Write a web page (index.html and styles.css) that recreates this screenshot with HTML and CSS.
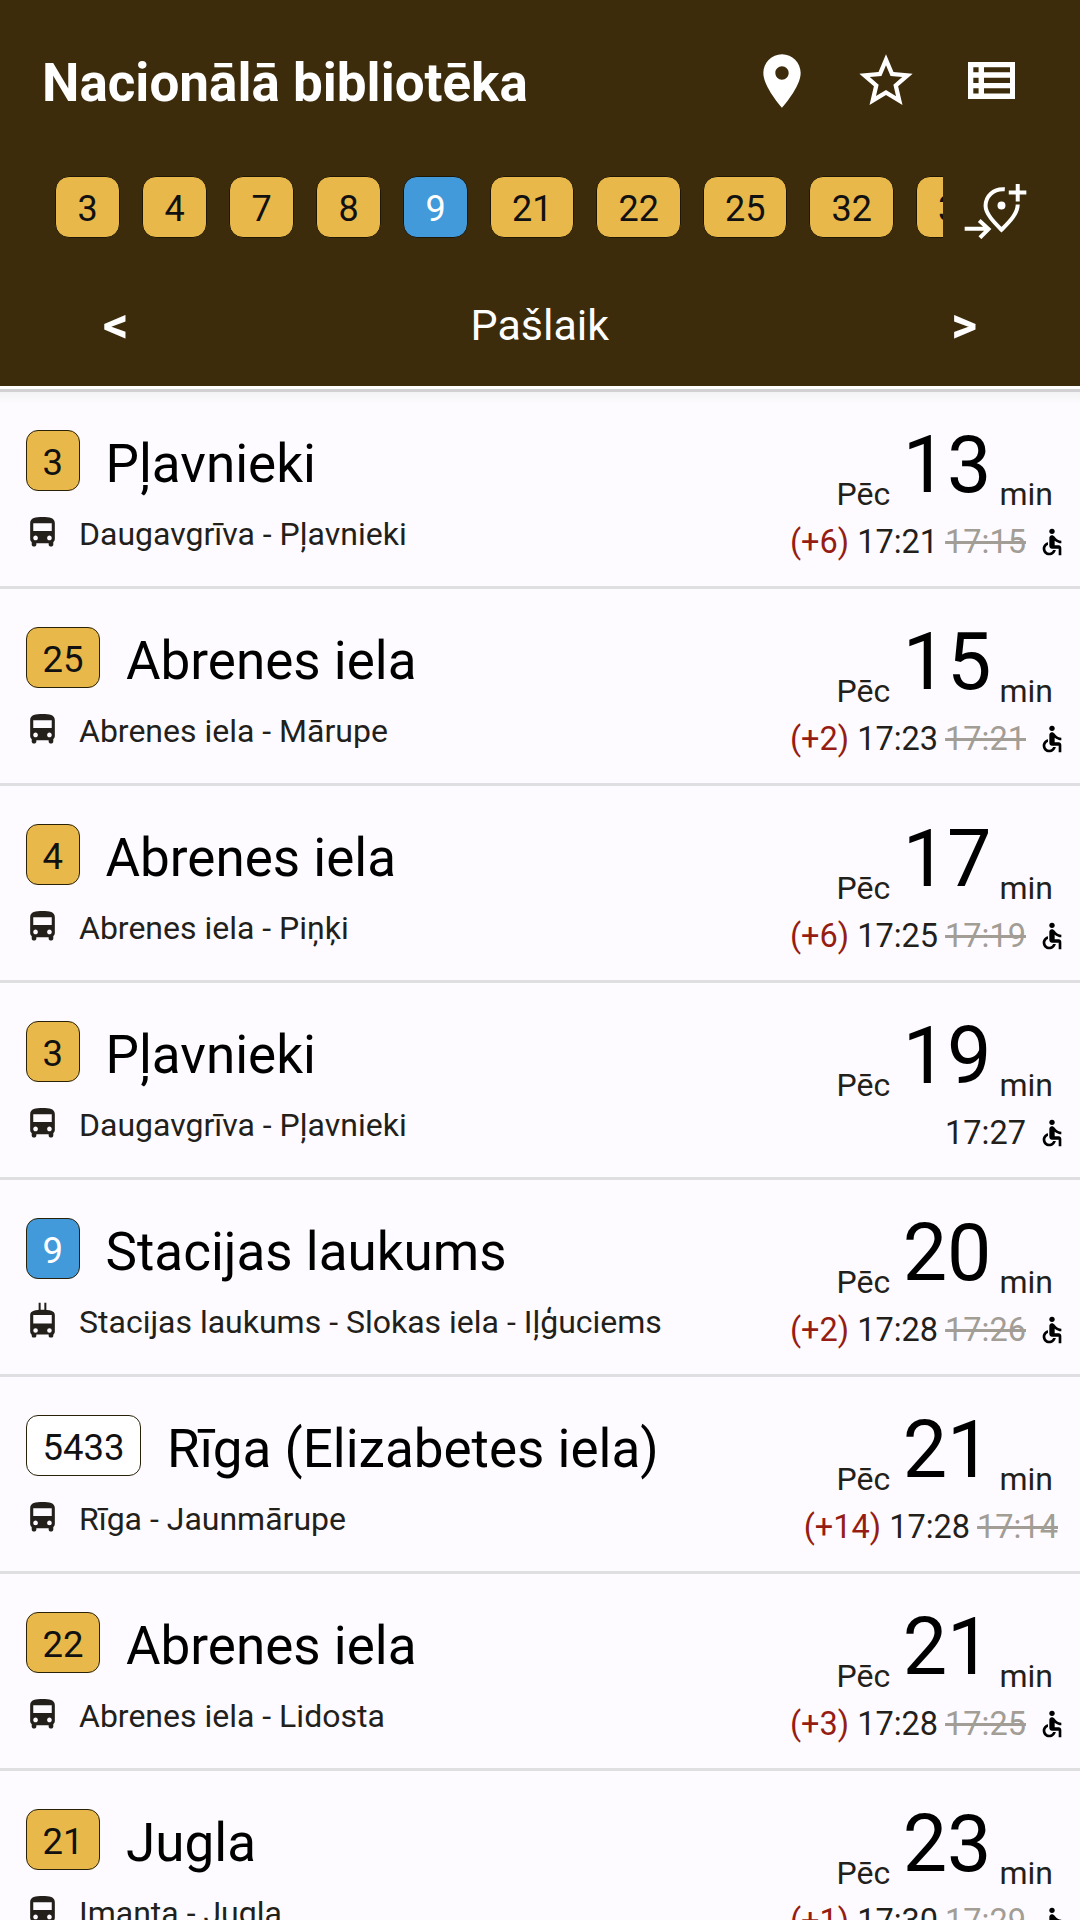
FILE: index.html
```html
<!DOCTYPE html>
<html lang="lv">
<head>
<meta charset="utf-8">
<title>Nacionālā bibliotēka</title>
<link rel="stylesheet" href="styles.css">
</head>
<body>
<svg class="defs" width="0" height="0" aria-hidden="true">
  <symbol id="bus" viewBox="0 0 24 24"><path d="M4 16c0 .88.39 1.67 1 2.22V20c0 .55.45 1 1 1h1c.55 0 1-.45 1-1v-1h8v1c0 .55.45 1 1 1h1c.55 0 1-.45 1-1v-1.78c.61-.55 1-1.34 1-2.22V6c0-3.5-3.58-4-8-4s-8 .5-8 4v10zm3.5 1c-.83 0-1.5-.67-1.5-1.5S6.67 14 7.5 14s1.5.67 1.5 1.5S8.33 17 7.5 17zm9 0c-.83 0-1.5-.67-1.5-1.5s.67-1.5 1.5-1.5 1.5.67 1.5 1.5-.67 1.5-1.5 1.5zm1.5-6H6V6h12v5z"/></symbol>
  <symbol id="trolley" viewBox="0 -2 24 24"><path fill-rule="evenodd" d="M4 17c0 .88.39 1.67 1 2.22V20c0 .55.45 1 1 1h1c.55 0 1-.45 1-1v-1h8v1c0 .55.45 1 1 1h1c.55 0 1-.45 1-1v-.78c.61-.55 1-1.34 1-2.22V6.500c0-3-3.58-3.500-8-3.500S4 3.500 4 6.500V17zM7.500 18a1.500 1.500 0 1 0 0-3 1.500 1.500 0 0 0 0 3zM16.500 18a1.500 1.500 0 1 0 0-3 1.500 1.500 0 0 0 0 3zM18 12V6.500H6V12h12z"/><path d="M9.500-1.500h1.300v6H9.500zM13.200-1.500h1.300v6h-1.300z"/></symbol>
  <symbol id="access" viewBox="0 0 24 24"><circle cx="12" cy="4" r="2"/><path d="M19 13v-2c-1.540.02-3.090-.75-4.070-1.830l-1.290-1.430c-.17-.19-.38-.34-.61-.45-.01 0-.01-.01-.02-.01H13c-.35-.2-.75-.3-1.190-.26C10.760 7.110 10 8.040 10 9.090V15c0 1.100.9 2 2 2h5v5h2v-5.500c0-1.100-.9-2-2-2h-3v-3.450c1.290 1.070 3.250 1.940 5 1.950zm-6.170 5c-.41 1.160-1.520 2-2.830 2-1.660 0-3-1.340-3-3 0-1.310.84-2.410 2-2.830V12.100c-2.280.46-4 2.480-4 4.900 0 2.760 2.240 5 5 5 2.420 0 4.440-1.720 4.900-4h-2.070z"/></symbol>
</svg>

<header class="header">
  <div class="top">
    <h1 class="title">Nacionālā bibliotēka</h1>
    <div class="actions">
      <svg class="act pin" viewBox="0 0 24 24"><path d="M12 2C8.130 2 5 5.130 5 9c0 5.250 7 13 7 13s7-7.750 7-13c0-3.870-3.130-7-7-7zm0 9.500c-1.380 0-2.500-1.120-2.500-2.500s1.120-2.500 2.500-2.500 2.500 1.120 2.500 2.500-1.120 2.500-2.500 2.500z"/></svg>
      <svg class="act" viewBox="0 0 24 24"><path d="M22 9.240l-7.190-.62L12 2 9.190 8.630 2 9.240l5.460 4.730L5.820 21 12 17.270 18.180 21l-1.630-7.030L22 9.240zM12 15.400l-3.760 2.270 1-4.280-3.320-2.880 4.380-.38L12 6.100l1.710 4.040 4.380.38-3.320 2.880 1 4.280L12 15.400z"/></svg>
      <svg class="act-table" viewBox="0 0 47.300 37"><path fill-rule="evenodd" d="M0 0h47.300v37H0zM5.300 5.300v5h5.300v-5zM16 5.300v5h26v-5zM5.300 15.700v5.300h5.300v-5.300zM16 15.700v5.300h26v-5.300zM5.300 26.300v5.300h5.300v-5.300zM16 26.300v5.300h26v-5.300z"/></svg>
    </div>
  </div>
  <div class="rail-row">
    <div class="rail">
      <span class="chip y">3</span><span class="chip y">4</span><span class="chip y">7</span><span class="chip y">8</span><span class="chip b">9</span><span class="chip y">21</span><span class="chip y">22</span><span class="chip y">25</span><span class="chip y">32</span><span class="chip y">38</span>
    </div>
    <svg class="add" viewBox="730 488 190 167" fill="none" stroke="#fff" stroke-width="12">
      <path d="M853 506C818 503 795 528 795 556C795 580 820 605 843 628C866 605 892 580 892 552"/>
      <circle cx="843" cy="555" r="12" fill="#fff" stroke="none"/>
      <path d="M865 516H918M892 490V543M732 625H803M776 600L804 626L778 652"/>
    </svg>
  </div>
  <nav class="nav"><b class="arrow">&lt;</b><span class="now">Pašlaik</span><b class="arrow">&gt;</b></nav>
</header>
<div class="stripe"></div>

<main class="list">
  <article class="row first">
    <div class="info">
      <div class="line"><span class="badge y">3</span><span class="dest">Pļavnieki</span></div>
      <div class="route"><svg class="veh"><use href="#bus"/></svg><span>Daugavgrīva - Pļavnieki</span></div>
    </div>
    <div class="eta">
      <div class="when"><span class="small">Pēc</span><span class="big">13</span><span class="small">min</span></div>
      <div class="times"><span class="late">(+6)</span><span>17:21</span><s>17:15</s><svg class="wheel"><use href="#access"/></svg></div>
    </div>
  </article>
  <article class="row">
    <div class="info">
      <div class="line"><span class="badge y">25</span><span class="dest">Abrenes iela</span></div>
      <div class="route"><svg class="veh"><use href="#bus"/></svg><span>Abrenes iela - Mārupe</span></div>
    </div>
    <div class="eta">
      <div class="when"><span class="small">Pēc</span><span class="big">15</span><span class="small">min</span></div>
      <div class="times"><span class="late">(+2)</span><span>17:23</span><s>17:21</s><svg class="wheel"><use href="#access"/></svg></div>
    </div>
  </article>
  <article class="row">
    <div class="info">
      <div class="line"><span class="badge y">4</span><span class="dest">Abrenes iela</span></div>
      <div class="route"><svg class="veh"><use href="#bus"/></svg><span>Abrenes iela - Piņķi</span></div>
    </div>
    <div class="eta">
      <div class="when"><span class="small">Pēc</span><span class="big">17</span><span class="small">min</span></div>
      <div class="times"><span class="late">(+6)</span><span>17:25</span><s>17:19</s><svg class="wheel"><use href="#access"/></svg></div>
    </div>
  </article>
  <article class="row">
    <div class="info">
      <div class="line"><span class="badge y">3</span><span class="dest">Pļavnieki</span></div>
      <div class="route"><svg class="veh"><use href="#bus"/></svg><span>Daugavgrīva - Pļavnieki</span></div>
    </div>
    <div class="eta">
      <div class="when"><span class="small">Pēc</span><span class="big">19</span><span class="small">min</span></div>
      <div class="times"><span>17:27</span><svg class="wheel"><use href="#access"/></svg></div>
    </div>
  </article>
  <article class="row">
    <div class="info">
      <div class="line"><span class="badge b">9</span><span class="dest">Stacijas laukums</span></div>
      <div class="route"><svg class="veh"><use href="#trolley"/></svg><span>Stacijas laukums - Slokas iela - Iļģuciems</span></div>
    </div>
    <div class="eta">
      <div class="when"><span class="small">Pēc</span><span class="big">20</span><span class="small">min</span></div>
      <div class="times"><span class="late">(+2)</span><span>17:28</span><s>17:26</s><svg class="wheel"><use href="#access"/></svg></div>
    </div>
  </article>
  <article class="row">
    <div class="info">
      <div class="line"><span class="badge w">5433</span><span class="dest">Rīga (Elizabetes iela)</span></div>
      <div class="route"><svg class="veh"><use href="#bus"/></svg><span>Rīga - Jaunmārupe</span></div>
    </div>
    <div class="eta">
      <div class="when"><span class="small">Pēc</span><span class="big">21</span><span class="small">min</span></div>
      <div class="times nowheel"><span class="late">(+14)</span><span>17:28</span><s>17:14</s></div>
    </div>
  </article>
  <article class="row">
    <div class="info">
      <div class="line"><span class="badge y">22</span><span class="dest">Abrenes iela</span></div>
      <div class="route"><svg class="veh"><use href="#bus"/></svg><span>Abrenes iela - Lidosta</span></div>
    </div>
    <div class="eta">
      <div class="when"><span class="small">Pēc</span><span class="big">21</span><span class="small">min</span></div>
      <div class="times"><span class="late">(+3)</span><span>17:28</span><s>17:25</s><svg class="wheel"><use href="#access"/></svg></div>
    </div>
  </article>
  <article class="row">
    <div class="info">
      <div class="line"><span class="badge y">21</span><span class="dest">Jugla</span></div>
      <div class="route"><svg class="veh"><use href="#bus"/></svg><span>Imanta - Jugla</span></div>
    </div>
    <div class="eta">
      <div class="when"><span class="small">Pēc</span><span class="big">23</span><span class="small">min</span></div>
      <div class="times"><span class="late">(+1)</span><span>17:30</span><s>17:29</s><svg class="wheel"><use href="#access"/></svg></div>
    </div>
  </article>
</main>
</body>
</html>
```
FILE: styles.css
```css
* { box-sizing: border-box; }
html, body { margin: 0; height: 1920px; overflow: hidden; }
body { background: #fdfbff; font-family: Roboto, sans-serif; color: #000; }
.defs { position: absolute; }

.header { height: 386px; background: #3d2c0b; color: #fff; display: flex; flex-direction: column; }
.top { height: 164px; display: flex; align-items: center; justify-content: space-between; padding: 0 54px 0 42px; }
.title { margin: 3px 0 0; font-size: 53px; font-weight: 700; line-height: 1; }
.actions { display: flex; align-items: center; margin-bottom: 3px; }
.act { width: 64px; height: 64px; fill: #fff; margin-right: 41px; }
.pin { margin-right: 40px; }
.act-table { width: 47.300px; height: 37px; fill: #fff; margin-left: 9px; margin-right: 11px; }

.rail-row { display: flex; align-items: flex-start; margin-top: 12px; height: 62px; padding-left: 55px; }
.rail { width: 888px; display: flex; gap: 22px; overflow: hidden; flex: none; }
.chip { flex: none; height: 62px; min-width: 65px; padding: 3px 21px 0; border-radius: 14px; border: 1px solid #1f1705; font-size: 36px; display: flex; align-items: center; justify-content: center; }
.y { background: #e9b84a; color: #111; }
.b { background: #429ada; color: #fff; }
.add { width: 63px; height: 56px; margin-left: 21px; margin-top: 7px; flex: none; }

.nav { display: flex; align-items: center; justify-content: space-between; height: 60px; margin-top: 57px; padding: 0 103px; }
.now { font-size: 43px; }
.arrow { font-size: 50px; font-weight: 700; line-height: 60px; }

.stripe { height: 6px; background: linear-gradient(#fff 0 3px, #d1d0d3 3px 6px); }

.row { height: 197px; border-bottom: 3px solid #dfdee1; background: #fdfbff; padding: 38px 11px 0 26px; display: flex; justify-content: space-between; }
.first { background: linear-gradient(#f3f2f4, #fdfbff 12px); }
.info { display: flex; flex-direction: column; }
.line { display: flex; align-items: center; gap: 26px; height: 61px; }
.badge { height: 61px; min-width: 53px; padding: 3px 15.500px 0; border-radius: 12px; border: 1px solid #2a2208; font-size: 36.500px; display: flex; align-items: center; justify-content: center; }
.w { background: #fff; color: #111; }
.dest { font-size: 53px; line-height: 60px; white-space: nowrap; margin-top: 6px; }
.route { display: flex; align-items: center; margin-top: 23px; color: #231f1a; font-size: 32px; line-height: 40px; white-space: nowrap; }
.veh { width: 37px; height: 37px; fill: #231f1a; margin: 0 18px 3px -2px; flex: none; }

.eta { display: flex; flex-direction: column; align-items: flex-end; color: #231f1a; }
.when { display: flex; align-items: flex-end; height: 84px; margin-right: 16px; }
.small { font-size: 32px; line-height: 36px; margin-bottom: 2px; }
.big { font-size: 79px; line-height: 80px; color: #000; margin: 0 8px 9px 12.500px; }
.times { display: flex; align-items: center; gap: 7px; font-size: 32.500px; line-height: 40px; height: 40px; margin-top: 8px; }
.late { color: #961d12; margin-right: 1px; }
s { color: #a29d95; }
.wheel { width: 32px; height: 32px; fill: #000; margin-left: 3px; margin-right: 1px; flex: none; }
.nowheel { margin-right: 11px; }
```
